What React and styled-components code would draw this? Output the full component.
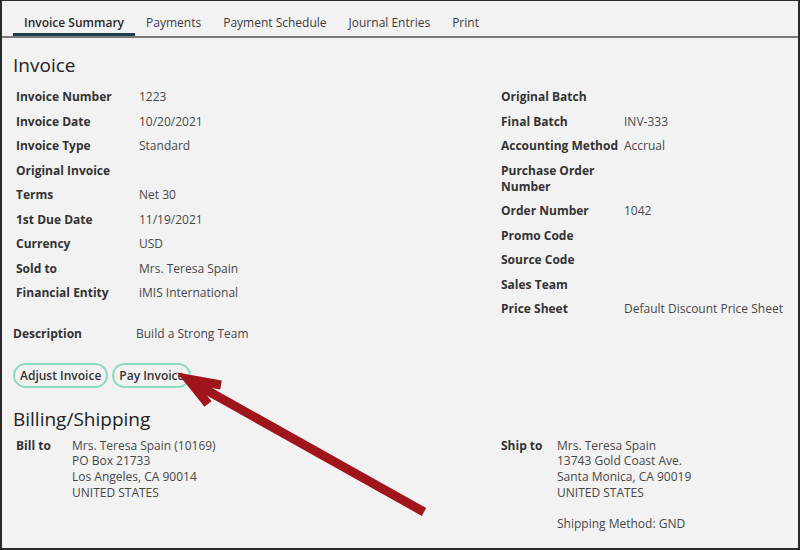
import React from "react";
import styled, { createGlobalStyle } from "styled-components";

const Global = createGlobalStyle`
  * { box-sizing: border-box; }
  html, body { margin: 0; padding: 0; background: #f2f2f2; }
  body { font-family: "Open Sans", "Liberation Sans", sans-serif; }
`;

const Page = styled.div`
  position: relative;
  width: 800px;
  height: 550px;
  background: #f2f2f2;
  border: 2px solid #2a2a2a;
  border-top-width: 1px;
  overflow: hidden;
`;

const TabBar = styled.div`
  display: flex;
  height: 37px;
  padding-left: 11px;
  border-bottom: 2px solid #7a7a7a;
`;

const Tab = styled.div`
  display: flex;
  align-items: center;
  padding: 10px 11px 0;
  font-size: 12px;
  color: ${(p) => (p.$active ? "#2a2a2a" : "#3c3c3c")};
  font-weight: ${(p) => (p.$active ? 600 : 400)};
  border-bottom: 3px solid ${(p) => (p.$active ? "#1d3d4d" : "transparent")};
`;

const Content = styled.div`
  padding: 0 11px;
`;

const Heading = styled.h2`
  margin: ${(p) => p.$mt}px 0 0;
  font-size: 19px;
  line-height: 24px;
  font-weight: 400;
  color: #222;
`;

const Columns = styled.div`
  display: grid;
  grid-template-columns: 488px 1fr;
  margin-top: 7.75px;
`;

const FieldList = styled.div`
  display: flex;
  flex-direction: column;
  padding-left: ${(p) => p.$pl ?? 0}px;
`;

const Row = styled.div`
  display: grid;
  grid-template-columns: 123px 1fr;
  padding: 4.25px 0;
  font-size: 12px;
  line-height: 16px;
`;

const Label = styled.div`
  font-weight: 700;
  color: #333;
`;

const Value = styled.div`
  color: #484848;
`;

const DescRow = styled(Row)`
  padding-left: 0;
`;

const Buttons = styled.div`
  display: flex;
  gap: 4px;
  margin-top: 16.75px;
`;

const Button = styled.button`
  height: 25px;
  padding: 0 5px;
  border: 2px solid #8edcbc;
  border-radius: 13px;
  background: transparent;
  font-family: inherit;
  font-size: 12px;
  font-weight: 600;
  color: #333;
`;

const AddressGrid = styled.div`
  display: grid;
  grid-template-columns: 488px 1fr;
  margin-top: 7px;
`;

const Address = styled.div`
  display: grid;
  grid-template-columns: 56px 1fr;
  padding-left: ${(p) => p.$pl ?? 0}px;
  font-size: 12px;
  line-height: 15.7px;
`;

const Lines = styled.div`
  display: flex;
  flex-direction: column;
  color: #484848;
`;

const Gap = styled.div`
  height: 15.7px;
`;

const Arrow = styled.svg`
  position: absolute;
  left: -2px;
  top: -1px;
  pointer-events: none;
`;

const left = [
  ["Invoice Number", "1223"],
  ["Invoice Date", "10/20/2021"],
  ["Invoice Type", "Standard"],
  ["Original Invoice", ""],
  ["Terms", "Net 30"],
  ["1st Due Date", "11/19/2021"],
  ["Currency", "USD"],
  ["Sold to", "Mrs. Teresa Spain"],
  ["Financial Entity", "iMIS International"],
];

const right = [
  ["Original Batch", ""],
  ["Final Batch", "INV-333"],
  ["Accounting Method", "Accrual"],
  ["Purchase Order Number", ""],
  ["Order Number", "1042"],
  ["Promo Code", ""],
  ["Source Code", ""],
  ["Sales Team", ""],
  ["Price Sheet", "Default Discount Price Sheet"],
];

const tabs = ["Invoice Summary", "Payments", "Payment Schedule", "Journal Entries", "Print"];

export default function App() {
  return (
    <>
      <Global />
      <Page>
        <TabBar>
          {tabs.map((t, i) => (
            <Tab key={t} $active={i === 0}>{t}</Tab>
          ))}
        </TabBar>
        <Content>
          <Heading $mt={15}>Invoice</Heading>
          <Columns>
            <FieldList $pl={3}>
              {left.map(([l, v]) => (
                <Row key={l}>
                  <Label>{l}</Label>
                  <Value>{v}</Value>
                </Row>
              ))}
            </FieldList>
            <FieldList>
              {right.map(([l, v]) => (
                <Row key={l}>
                  <Label>{l}</Label>
                  <Value>{v}</Value>
                </Row>
              ))}
            </FieldList>
          </Columns>
          <DescRow>
            <Label>Description</Label>
            <Value>Build a Strong Team</Value>
          </DescRow>
          <Buttons>
            <Button>Adjust Invoice</Button>
            <Button>Pay Invoice</Button>
          </Buttons>
          <Heading $mt={19}>Billing/Shipping</Heading>
          <AddressGrid>
            <Address $pl={3}>
              <Label>Bill to</Label>
              <Lines>
                <span>Mrs. Teresa Spain (10169)</span>
                <span>PO Box 21733</span>
                <span>Los Angeles, CA 90014</span>
                <span>UNITED STATES</span>
              </Lines>
            </Address>
            <Address>
              <Label>Ship to</Label>
              <Lines>
                <span>Mrs. Teresa Spain</span>
                <span>13743 Gold Coast Ave.</span>
                <span>Santa Monica, CA 90019</span>
                <span>UNITED STATES</span>
                <Gap />
                <span>Shipping Method: GND</span>
              </Lines>
            </Address>
          </AddressGrid>
        </Content>
        <Arrow width="800" height="550" viewBox="0 0 800 550">
          <line x1="192" y1="382" x2="424" y2="512" stroke="#a0151c" strokeWidth="9" />
          <polyline
            points="221,385 188,379 208,404"
            fill="none"
            stroke="#a0151c"
            strokeWidth="9"
            strokeLinejoin="miter"
          />
        </Arrow>
      </Page>
    </>
  );
}
